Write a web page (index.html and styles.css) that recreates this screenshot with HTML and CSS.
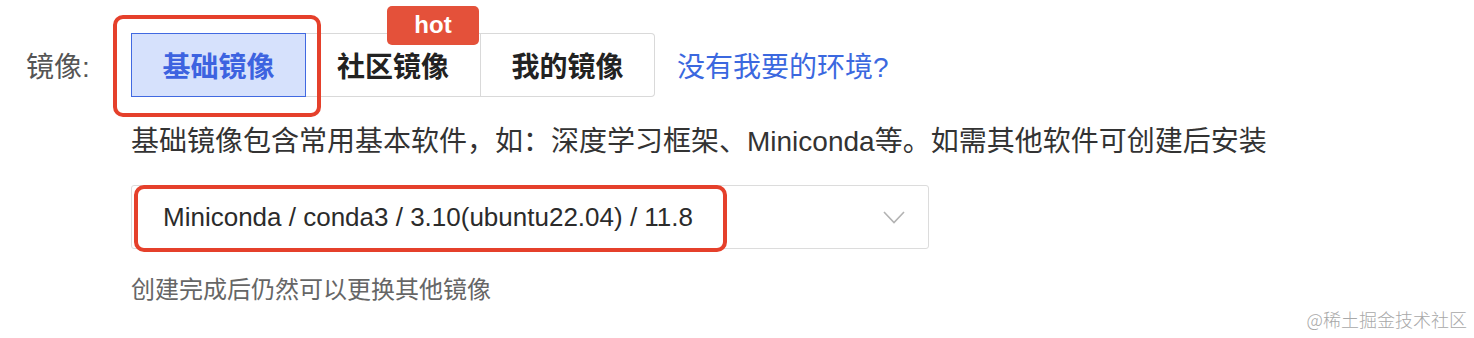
FILE: index.html
```html
<!DOCTYPE html>
<html lang="zh">
<head>
    <meta charset="UTF-8">
    <meta name="viewport" content="width=device-width, initial-scale=1.0">
    <title>镜像选择</title>
    <link rel="stylesheet" href="styles.css">
</head>
<body>
    <div class="form">
        <div class="row">
            <span class="label">镜像:</span>
            <div class="field">
                <div class="tabs">
                    <button class="tab active">基础镜像<span class="mark mark-tab"></span></button>
                    <button class="tab">社区镜像<span class="hot">hot</span></button>
                    <button class="tab">我的镜像</button>
                </div>
                <a class="link" href="#">没有我要的环境?</a>
            </div>
        </div>

        <div class="desc">基础镜像包含常用基本软件，如：深度学习框架、Miniconda等。如需其他软件可创建后安装</div>

        <div class="select">
            <span class="select-value">Miniconda / conda3 / 3.10(ubuntu22.04) / 11.8</span>
            <svg class="arrow" width="22" height="13" viewBox="0 0 22 13">
                <polyline points="1,1 11,11.5 21,1" fill="none" stroke="#b3b3b3" stroke-width="1.6"/>
            </svg>
            <span class="mark mark-select"></span>
        </div>

        <div class="hint">创建完成后仍然可以更换其他镜像</div>
    </div>

    <div class="watermark">@稀土掘金技术社区</div>
</body>
</html>
```

FILE: styles.css
```css
body {
    margin: 0;
    background-color: #ffffff;
    font-family: "Liberation Sans", "Noto Sans CJK SC", sans-serif;
    color: #333333;
    height: 338px;
    overflow: hidden;
    position: relative;
}
.form {
    padding: 33px 0 0 131px;
}
.row {
    display: flex;
    align-items: center;
    height: 64px;
    margin-left: -105px;
}
.label {
    width: 105px;
    font-size: 28px;
    color: #555555;
}
.field {
    display: flex;
    align-items: center;
}
.tabs {
    display: flex;
}
.tab {
    position: relative;
    width: 175px;
    height: 64px;
    padding: 0;
    margin: 0;
    font-family: "Liberation Sans", "Noto Sans CJK SC", sans-serif;
    font-size: 28px;
    font-weight: bold;
    color: #222222;
    background-color: #ffffff;
    border: 1px solid #d9d9d9;
    border-left: none;
    cursor: pointer;
}
.tab:first-child {
    border-left: 1px solid #d9d9d9;
    border-radius: 4px 0 0 4px;
}
.tab:last-child {
    border-radius: 0 4px 4px 0;
    width: 174px;
}
.tab.active {
    z-index: 2;
    color: #3d63e0;
    background-color: #d6e1fc;
    border: 1.5px solid #4169e1;
    border-radius: 0;
}
.hot {
    position: absolute;
    left: 81px;
    top: -28px;
    width: 92px;
    height: 39px;
    line-height: 37px;
    text-align: center;
    background-color: #e4513a;
    color: #ffffff;
    font-size: 24px;
    font-weight: bold;
    border-radius: 5px;
}
.link {
    margin-left: 22px;
    font-size: 28px;
    color: #3b68df;
    text-decoration: none;
}
.desc {
    margin-top: 25px;
    font-size: 28px;
    line-height: 40px;
    color: #333333;
}
.select {
    position: relative;
    box-sizing: border-box;
    width: 798px;
    height: 64px;
    margin-top: 23px;
    padding: 0 23px 0 31px;
    display: flex;
    align-items: center;
    justify-content: space-between;
    border: 1.5px solid #dcdcdc;
    border-radius: 3px;
}
.select-value {
    font-size: 26px;
    color: #2b2b2b;
}
.hint {
    margin-top: 24px;
    font-size: 24px;
    line-height: 34px;
    color: #666666;
}
.mark {
    position: absolute;
    z-index: 3;
    box-sizing: border-box;
    border: 4px solid #e5402b;
    border-radius: 10px;
    pointer-events: none;
}
.mark-tab {
    left: -19px;
    top: -19px;
    width: 208px;
    height: 102px;
}
.mark-select {
    left: 2px;
    top: -1px;
    width: 593px;
    height: 67px;
}
.watermark {
    position: absolute;
    right: 7px;
    bottom: 6px;
    font-size: 18px;
    color: #a8a8a8;
    font-family: "Noto Sans CJK SC", sans-serif;
    font-weight: 300;
}
```
